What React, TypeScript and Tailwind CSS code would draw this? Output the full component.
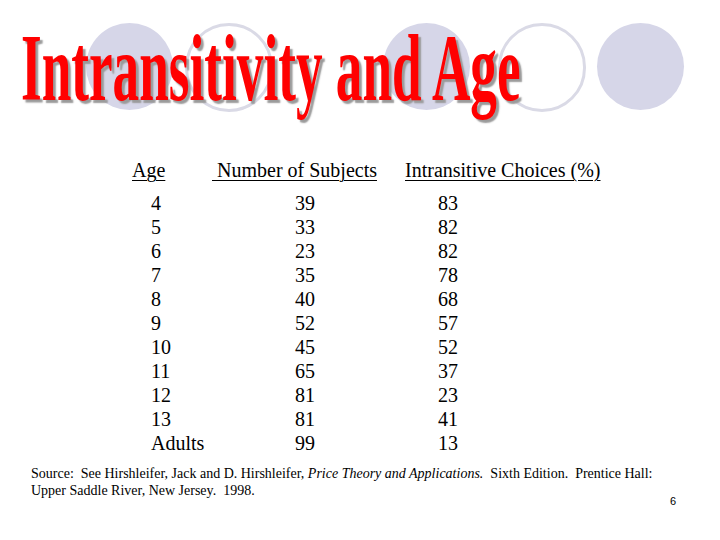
import React from "react";

const rows: [string, string, string][] = [
  ["4", "39", "83"],
  ["5", "33", "82"],
  ["6", "23", "82"],
  ["7", "35", "78"],
  ["8", "40", "68"],
  ["9", "52", "57"],
  ["10", "45", "52"],
  ["11", "65", "37"],
  ["12", "81", "23"],
  ["13", "81", "41"],
  ["Adults", "99", "13"],
];

// decorative bullets behind the title
const circles = [
  { left: 86, filled: true },
  { left: 185, filled: false },
  { left: 383, filled: true },
  { left: 498, filled: false },
  { left: 597, filled: true },
];

export default function App() {
  return (
    <div className="w-[720px] h-[540px] bg-white overflow-hidden font-['Liberation_Serif',serif] text-black">
      {/* Title */}
      <div className="relative h-[158px]">
        {circles.map((c, i) => (
          <div
            key={i}
            className={
              c.filled
                ? "absolute top-[23px] w-[87px] h-[87px] rounded-full bg-[#d6d6e8]"
                : "absolute top-[23px] w-[88px] h-[89px] rounded-full border-[3px] border-[#dadae6]"
            }
            style={{ left: c.left }}
          />
        ))}
        <div className="relative pt-[21px] pl-[21px]">
          <h1 className="inline-block origin-left scale-x-[0.56] whitespace-nowrap text-[95px] leading-[95px] font-bold text-[#ff0000] [text-shadow:5px_3px_2px_#9a9a9a]">
            Intransitivity and Age
          </h1>
        </div>
      </div>

      {/* Table */}
      <div className="pl-[132px] text-[20px] leading-[24px]">
        <div className="grid grid-cols-[80px_193px_1fr] mb-[9px]">
          <span className="underline underline-offset-[3px] decoration-1">Age</span>
          <span className="underline underline-offset-[3px] decoration-1 whitespace-pre"> Number of Subjects</span>
          <span className="underline underline-offset-[3px] decoration-1">Intransitive Choices (%)</span>
        </div>
        {rows.map(([age, n, pct]) => (
          <div key={age} className="grid grid-cols-[80px_193px_1fr]">
            <span className="pl-[19px]">{age}</span>
            <span className="pl-[83px]">{n}</span>
            <span className="pl-[33px]">{pct}</span>
          </div>
        ))}
      </div>

      {/* Footer */}
      <div className="flex justify-between pl-[31px] pr-[44px] mt-[10px]">
        <p className="text-[14px] leading-[17px] whitespace-pre">
          Source:  See Hirshleifer, Jack and D. Hirshleifer, <i>Price Theory and Applications.</i>  Sixth Edition.  Prentice Hall:
          <br />
          Upper Saddle River, New Jersey.  1998.
        </p>
        <span className="mt-[30px] text-[11px] leading-[13px] font-['Liberation_Sans',sans-serif]">6</span>
      </div>
    </div>
  );
}
